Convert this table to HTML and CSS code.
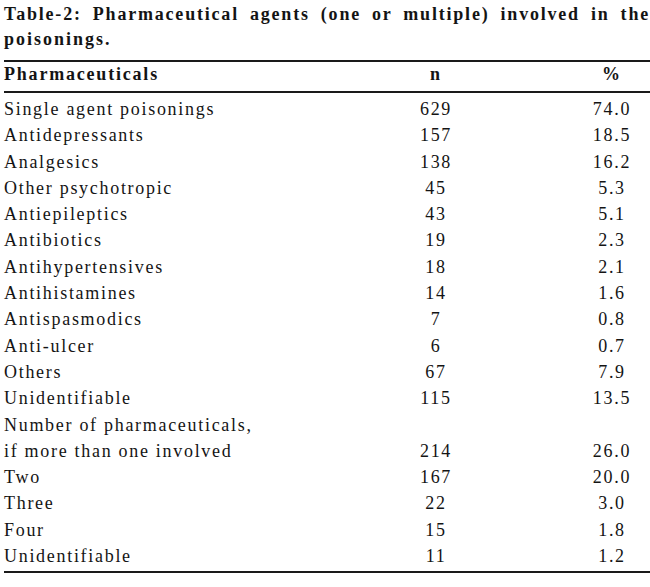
FILE: index.html
```html
<!DOCTYPE html>
<html lang="en">
<head>
<meta charset="utf-8">
<title>Table-2</title>
<link rel="stylesheet" href="styles.css">
</head>
<body>
<div class="page">
  <div class="caption">
    <div class="cap-line1">Table-2: Pharmaceutical agents (one or multiple) involved in the</div>
    <div class="cap-line2">poisonings.</div>
  </div>
  <div class="table">
    <div class="row head">
      <div class="label">Pharmaceuticals</div>
      <div class="num">n</div>
      <div class="pct">%</div>
    </div>
    <div class="body">
      <div class="row"><div class="label">Single agent poisonings</div><div class="num">629</div><div class="pct">74.0</div></div>
      <div class="row"><div class="label">Antidepressants</div><div class="num">157</div><div class="pct">18.5</div></div>
      <div class="row"><div class="label">Analgesics</div><div class="num">138</div><div class="pct">16.2</div></div>
      <div class="row"><div class="label">Other psychotropic</div><div class="num">45</div><div class="pct">5.3</div></div>
      <div class="row"><div class="label">Antiepileptics</div><div class="num">43</div><div class="pct">5.1</div></div>
      <div class="row"><div class="label">Antibiotics</div><div class="num">19</div><div class="pct">2.3</div></div>
      <div class="row"><div class="label">Antihypertensives</div><div class="num">18</div><div class="pct">2.1</div></div>
      <div class="row"><div class="label">Antihistamines</div><div class="num">14</div><div class="pct">1.6</div></div>
      <div class="row"><div class="label">Antispasmodics</div><div class="num">7</div><div class="pct">0.8</div></div>
      <div class="row"><div class="label">Anti-ulcer</div><div class="num">6</div><div class="pct">0.7</div></div>
      <div class="row"><div class="label">Others</div><div class="num">67</div><div class="pct">7.9</div></div>
      <div class="row"><div class="label">Unidentifiable</div><div class="num">115</div><div class="pct">13.5</div></div>
      <div class="row"><div class="label">Number of pharmaceuticals,<br>if more than one involved</div><div class="num">214</div><div class="pct">26.0</div></div>
      <div class="row"><div class="label">Two</div><div class="num">167</div><div class="pct">20.0</div></div>
      <div class="row"><div class="label">Three</div><div class="num">22</div><div class="pct">3.0</div></div>
      <div class="row"><div class="label">Four</div><div class="num">15</div><div class="pct">1.8</div></div>
      <div class="row"><div class="label">Unidentifiable</div><div class="num">11</div><div class="pct">1.2</div></div>
    </div>
  </div>
</div>
</body>
</html>
```
FILE: styles.css
```css
html, body {
  margin: 0;
  padding: 0;
  background: #fff;
}
body {
  font-family: "Liberation Serif", "Times New Roman", serif;
  color: #141414;
}
.page {
  width: 646px;
  padding: 2px 0 0 4px;
}
.caption {
  font-weight: bold;
  font-size: 18px;
  line-height: 25px;
  letter-spacing: 1.8px;
}
.cap-line1 {
  text-align: justify;
  text-align-last: justify;
}
.cap-line2 {
  letter-spacing: 2px;
}
.table {
  margin-top: 7.5px;
  border-top: 2px solid #1a1a1a;
  border-bottom: 2px solid #1a1a1a;
  font-size: 18px;
  letter-spacing: 1.7px;
}
.row {
  display: flex;
  align-items: flex-end;
  line-height: 26.3px;
}
.head {
  font-weight: bold;
  line-height: 24px;
  padding-bottom: 5.5px;
  border-bottom: 2px solid #1a1a1a;
  letter-spacing: 1.8px;
}
.body {
  padding: 3px 0 1.5px;
}
.label {
  flex: 1;
}
.num {
  width: 108px;
  margin-right: 82px;
  text-align: center;
  padding-left: 2px;
}
.pct {
  width: 76px;
  text-align: center;
  padding-left: 2px;
}
```
